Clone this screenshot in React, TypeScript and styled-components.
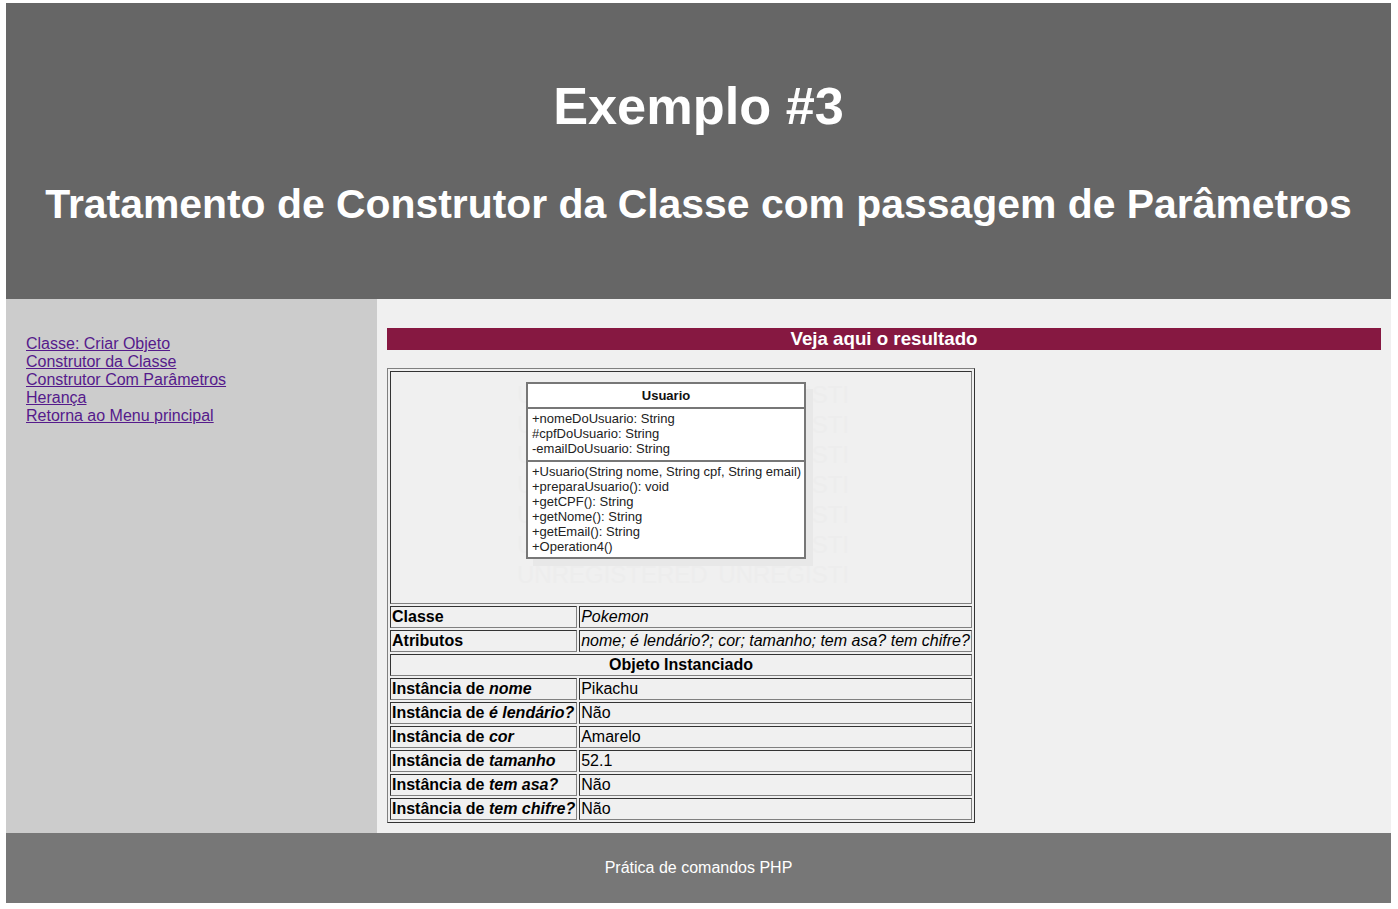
import React from "react";
import styled, { createGlobalStyle } from "styled-components";

const Global = createGlobalStyle`
  html, body { margin: 0; padding: 0; background: #fff; }
  body { font-family: "Liberation Sans", Arial, sans-serif; font-size: 16px; line-height: 18px; color: #000; }
`;

const Page = styled.div`
  width: 1385px;
  margin-left: 6px;
  padding-top: 3px;
`;

const Header = styled.header`
  height: 296px;
  background: #666;
  color: #fff;
  display: flex;
  flex-direction: column;
  align-items: center;
  font-weight: 700;
`;

const Title = styled.h1`
  margin: 73px 0 0;
  font-size: 52.3px;
  line-height: 60px;
`;

const Subtitle = styled.h2`
  margin: 44px 0 0;
  font-size: 40.9px;
  line-height: 48px;
`;

const Main = styled.div`
  display: grid;
  grid-template-columns: 371px 1014px;
`;

const Sidebar = styled.nav`
  background: #ccc;
  padding: 36px 20px 0;
  display: flex;
  flex-direction: column;
  align-items: flex-start;
`;

const NavLink = styled.a`
  color: #551a8b;
  text-decoration: underline;
`;

const Content = styled.main`
  background: #f0f0f0;
  padding: 29px 10px 10px;
`;

const ResultBar = styled.h3`
  margin: 0 0 18px;
  height: 22px;
  background: #861841;
  color: #fff;
  font-size: 18.72px;
  line-height: 22px;
  font-weight: 700;
  text-align: center;
`;

const Table = styled.table`
  width: 588px;
  border-collapse: separate;
  border-spacing: 2px;
  border: 1px solid;
  border-color: #808080 #333 #333 #808080;
`;

const Cell = styled.td<{ $center?: boolean; $italic?: boolean }>`
  padding: 1px;
  border: 1px solid;
  border-color: #333 #808080 #808080 #333;
  white-space: nowrap;
  text-align: ${(p) => (p.$center ? "center" : "left")};
  font-style: ${(p) => (p.$italic ? "italic" : "normal")};
`;

const LabelCell = styled(Cell)`
  width: 183px;
  font-weight: 700;
`;

const HeadCell = styled(Cell)`
  font-weight: 700;
`;

const Diagram = styled.div`
  position: relative;
  width: 340px;
  height: 229px;
  margin: 0 auto;
  padding: 9px 0 0 15px;
  box-sizing: border-box;
`;

const Watermark = styled.div`
  position: absolute;
  left: 6px;
  top: 7px;
  display: flex;
  flex-direction: column;
  color: #ededed;
  font-size: 24px;
  line-height: 30px;
  word-spacing: 4px;
  white-space: nowrap;
`;

const UmlBox = styled.div`
  position: relative;
  width: 276px;
  border: 2px solid #777;
  background: #fff;
  box-shadow: 7px 7px 0 #e8e8e8;
  font-size: 13px;
  line-height: 15px;
  color: #222;
`;

const UmlName = styled.div`
  height: 23px;
  line-height: 23px;
  text-align: center;
  font-weight: 700;
  color: #111;
`;

const UmlSection = styled.div`
  border-top: 2px solid #777;
  padding: 2px 0 4px 4px;
  white-space: nowrap;
`;

const UmlMethods = styled(UmlSection)`
  padding-bottom: 3px;
`;

const rows: [React.ReactNode, string][] = [
  [<>Instância de <em>nome</em></>, "Pikachu"],
  [<>Instância de <em>é lendário?</em></>, "Não"],
  [<>Instância de <em>cor</em></>, "Amarelo"],
  [<>Instância de <em>tamanho</em></>, "52.1"],
  [<>Instância de <em>tem asa?</em></>, "Não"],
  [<>Instância de <em>tem chifre?</em></>, "Não"],
];

const links = [
  "Classe: Criar Objeto",
  "Construtor da Classe",
  "Construtor Com Parâmetros",
  "Herança",
  "Retorna ao Menu principal",
];

const attrs = ["+nomeDoUsuario: String", "#cpfDoUsuario: String", "-emailDoUsuario: String"];
const methods = [
  "+Usuario(String nome, String cpf, String email)",
  "+preparaUsuario(): void",
  "+getCPF(): String",
  "+getNome(): String",
  "+getEmail(): String",
  "+Operation4()",
];

const Footer = styled.footer`
  height: 70px;
  background: #777;
  color: #fff;
  display: flex;
  align-items: center;
  justify-content: center;
`;

export default function App() {
  return (
    <Page>
      <Global />
      <Header>
        <Title>Exemplo #3</Title>
        <Subtitle>Tratamento de Construtor da Classe com passagem de Parâmetros</Subtitle>
      </Header>
      <Main>
        <Sidebar>
          {links.map((l) => (
            <NavLink href="#" key={l}>{l}</NavLink>
          ))}
        </Sidebar>
        <Content>
          <ResultBar>Veja aqui o resultado</ResultBar>
          <Table>
            <tbody>
              <tr>
                <Cell colSpan={2}>
                  <Diagram>
                    <Watermark aria-hidden>
                      {Array.from({ length: 7 }, (_, i) => (
                        <span key={i}>UNREGISTERED UNREGISTI</span>
                      ))}
                    </Watermark>
                    <UmlBox>
                      <UmlName>Usuario</UmlName>
                      <UmlSection>
                        {attrs.map((a) => <div key={a}>{a}</div>)}
                      </UmlSection>
                      <UmlMethods>
                        {methods.map((m) => <div key={m}>{m}</div>)}
                      </UmlMethods>
                    </UmlBox>
                  </Diagram>
                </Cell>
              </tr>
              <tr>
                <LabelCell>Classe</LabelCell>
                <Cell $italic>Pokemon</Cell>
              </tr>
              <tr>
                <LabelCell>Atributos</LabelCell>
                <Cell $italic>nome; é lendário?; cor; tamanho; tem asa? tem chifre?</Cell>
              </tr>
              <tr>
                <HeadCell colSpan={2} $center>Objeto Instanciado</HeadCell>
              </tr>
              {rows.map(([label, value], i) => (
                <tr key={i}>
                  <LabelCell>{label}</LabelCell>
                  <Cell>{value}</Cell>
                </tr>
              ))}
            </tbody>
          </Table>
        </Content>
      </Main>
      <Footer>Prática de comandos PHP</Footer>
    </Page>
  );
}
